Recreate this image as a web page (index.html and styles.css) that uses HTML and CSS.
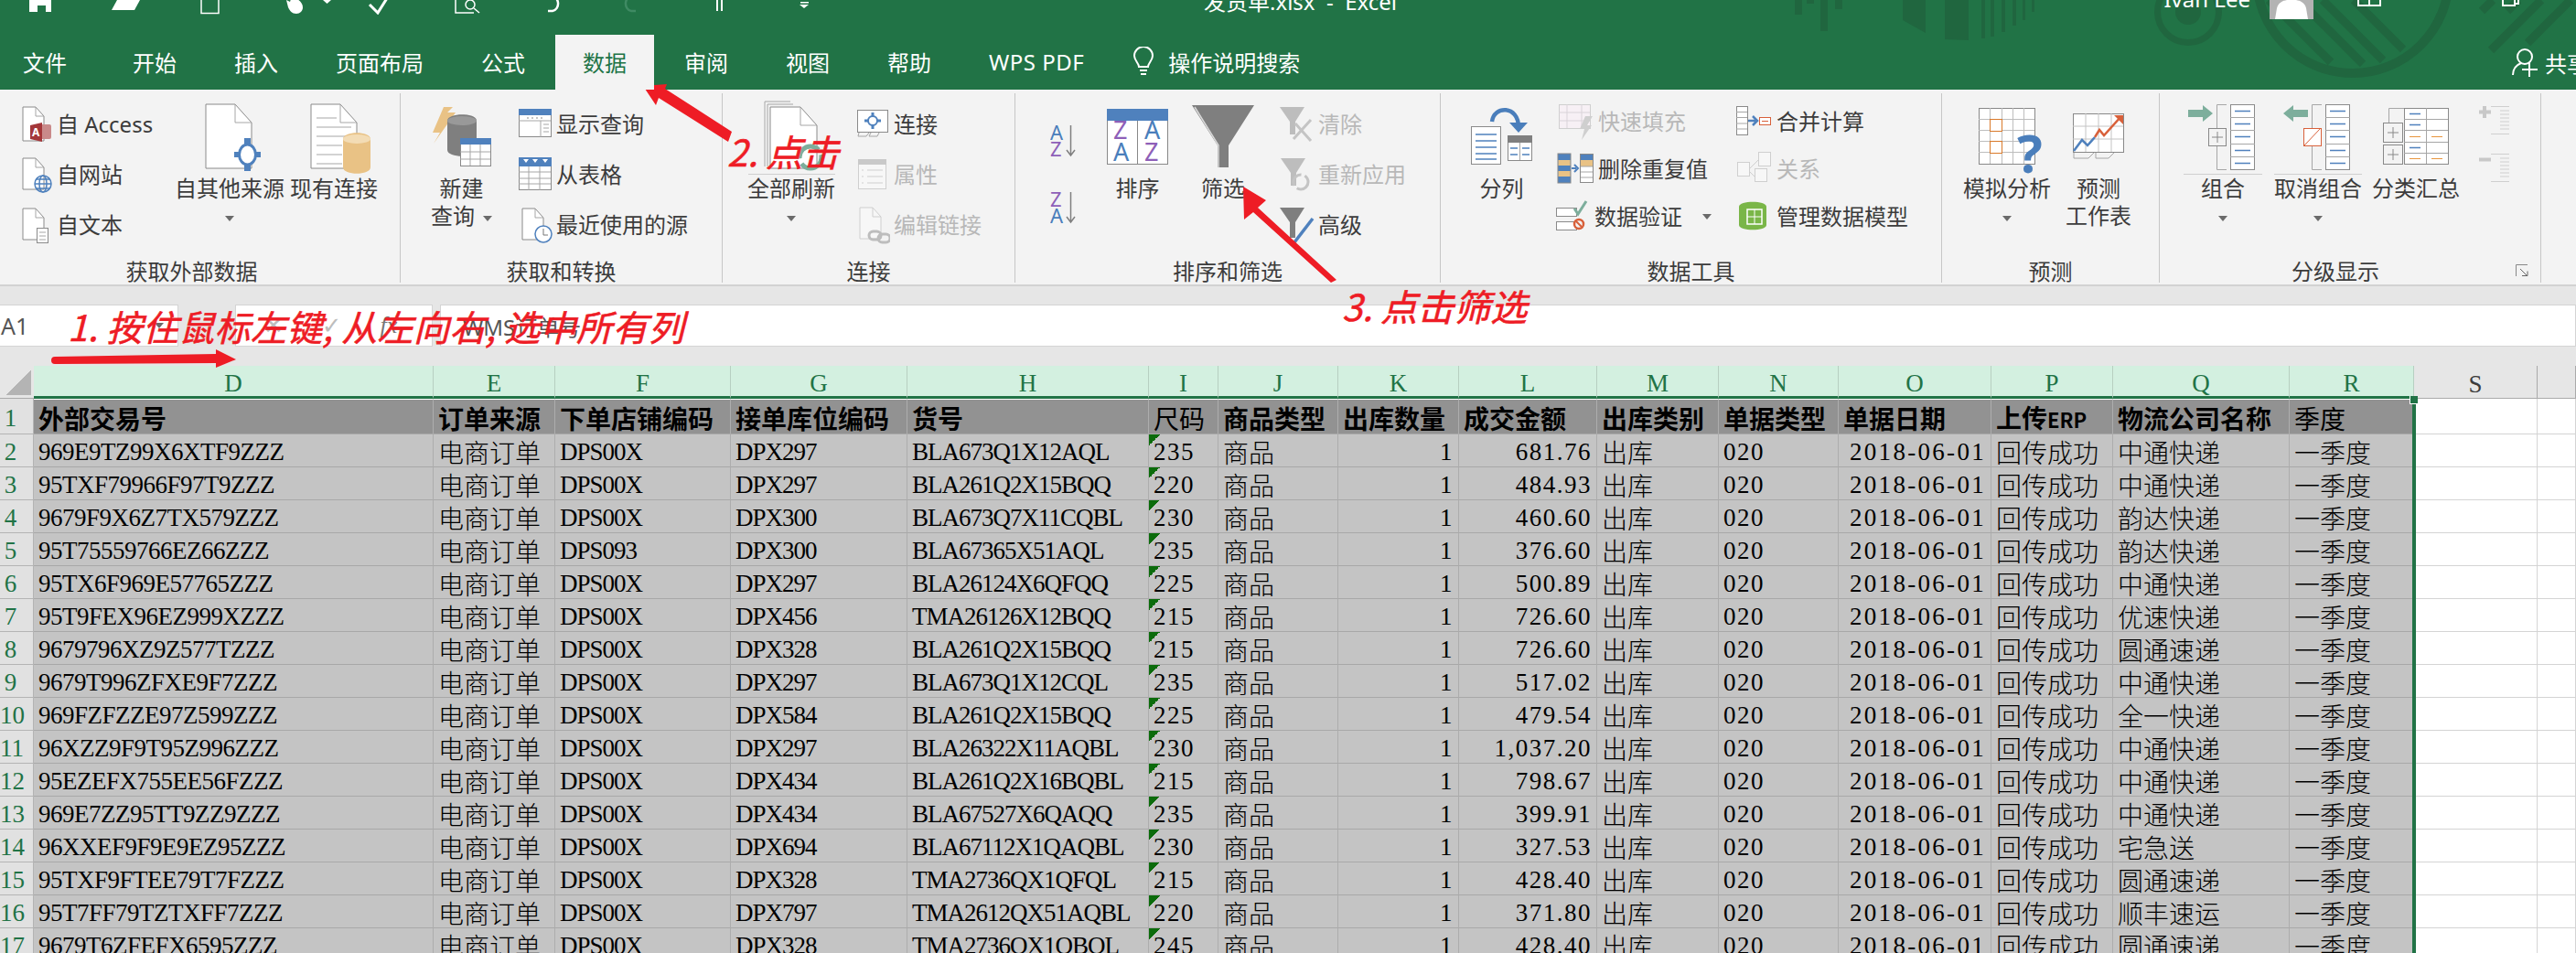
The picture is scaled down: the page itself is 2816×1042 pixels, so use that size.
FILE: index.html
```html
<!DOCTYPE html>
<html lang="zh-CN">
  <head>
    <meta charset="UTF-8" />
    <title>发货单.xlsx - Excel</title>
    <link rel="stylesheet" href="styles.css">
  </head>
  <body>
    <div class="page">
      <header class="titlebar">
        <!-- background pattern of the Excel theme -->
        <svg class="titlebar-art" width="2816" height="98">
          <g fill="#20663f">
            <rect x="1962" y="0" width="8" height="16"/>
            <rect x="1975" y="0" width="8" height="4"/>
            <rect x="1990" y="0" width="8" height="34"/>
            <rect x="2006" y="0" width="8" height="10"/>
            <path d="M2080 0h25v36l-25-14z"/>
            <path d="M2126 0h26v44l-26-1z"/>
            <rect x="2166" y="0" width="4" height="42"/>
            <rect x="2176" y="0" width="4" height="40"/>
            <rect x="2188" y="0" width="4" height="35"/>
            <rect x="2200" y="0" width="4" height="28"/>
            <rect x="2211" y="0" width="3" height="22"/>
            <rect x="2221" y="0" width="3" height="13"/>
            <circle cx="2392" cy="13" r="14"/>
          </g>
          <g fill="none" stroke="#20663f">
            <circle cx="2392" cy="13" r="33.5" stroke-width="7"/>
            <circle cx="2572" cy="-25" r="105" stroke-width="10"/>
            <g stroke-width="9">
              <path d="M2548 68L2480 0M2583 70L2513 0M2605 66L2539 0M2627 54L2573 0"/>
              <path d="M2723 55L2778 0M2763 47L2810 0M2713 12L2725 0M2741 12L2753 0"/>
            </g>
          </g>
        </svg>
        <div class="titleline">
          <svg class="qat" width="900" height="16" fill="#fff">
            <path d="M32 0h24v13H32z"/>
            <rect x="41" y="6" width="9" height="7" fill="#217346"/>
            <path d="M128 0h25l-6 11h-25z"/>
            <rect x="220" y="-5" width="19" height="19.5" fill="none" stroke="#fff" stroke-width="1.5"/>
            <path d="M313 0l4 2 1-3h7c3 2 6 5 6 9 0 4-3 7-7 7-5 0-7-3-9-7z"/>
            <path d="M353 0h9l-4.500 4z"/>
            <path d="M404 5l9 9 12-19" fill="none" stroke="#fff" stroke-width="3"/>
            <g fill="none" stroke="#fff" stroke-width="1.500">
              <path d="M498 -3V14H518"/>
              <circle cx="514" cy="5" r="5"/>
              <path d="M518 9l6 5"/>
              <path d="M602 -4a7 8 0 0 1 2 16h-5" stroke-width="2.500"/>
              <path d="M692 -4a7 8 0 0 0 -2 16h5" stroke="#3f8a63" stroke-width="2.500"/>
              <path d="M784 -2v14M789 -2v14" stroke-width="2"/>
            </g>
            <rect x="875" y="2" width="9" height="1.500"/>
            <path d="M874 5h10l-5 4z"/>
          </svg>
          <span class="doc-title">发货单.xlsx&nbsp; - &nbsp;Excel</span>
          <span class="user-name">Ivan Lee</span>
          <svg class="avatar" width="48" height="21">
            <rect width="48" height="21" fill="#b3b3b3"/>
            <circle cx="24" cy="-4" r="9" fill="#8f8f8f"/>
            <path d="M6 21l2-12c1-6 8-9 11-9h10c3 0 10 3 11 9l2 12z" fill="#fff"/>
          </svg>
          <svg class="win-icons" width="180" height="8" fill="none" stroke="#fff" stroke-width="2">
            <path d="M1 -3v9h24v-9M13 -3v9"/>
            <path d="M159 -3v9h13v-9M172 -1h4v5h-4"/>
          </svg>
        </div>
        <nav class="tabs">
          <a class="tab">文件</a>
          <a class="tab">开始</a>
          <a class="tab">插入</a>
          <a class="tab">页面布局</a>
          <a class="tab">公式</a>
          <a class="tab active">数据</a>
          <a class="tab">审阅</a>
          <a class="tab">视图</a>
          <a class="tab">帮助</a>
          <a class="tab tab-latin">WPS PDF</a>
          <span class="tell-me">
            <svg width="24" height="32" fill="none" stroke="#fff" stroke-width="2">
              <path d="M7 22c0-4-5-7-5-12a10 10 0 0 1 20 0c0 5-5 8-5 12z"/>
              <path d="M8 26h8M9 30h6"/>
            </svg>
            操作说明搜索
          </span>
          <span class="share">
            <svg width="28" height="31" fill="none" stroke="#fff" stroke-width="2">
              <circle cx="14" cy="9" r="8"/>
              <path d="M1 29c0-7 4-11 9-13"/>
              <path d="M19 15v16M11 23h17"/>
            </svg>
            共享
          </span>
        </nav>
      </header>

      <section class="ribbon">
        <div class="group g-external">
          <div class="group-body">
            <div class="small-col col-external">
              <div class="small-row">
                <svg width="34" height="45">
                  <path class="sheet-line" d="M1 4h14l9 10v27H1z"/><path class="fold" d="M15 4v10h9"/>
                  <rect x="19" y="23" width="13" height="16" rx="2" fill="#c98a8a"/>
                  <path d="M9 24l13-3v21l-13-3z" fill="#a4373a"/>
                  <text x="11" y="36" class="badge-a">A</text>
                </svg>
                <span>自 Access</span>
              </div>
              <div class="small-row">
                <svg width="34" height="45">
                  <path class="sheet-line" d="M1 5h14l9 10v24H1z"/><path class="fold" d="M15 5v10h9"/>
                  <circle cx="23" cy="33" r="9" class="blue-line"/>
                  <ellipse cx="23" cy="33" rx="4" ry="9" class="blue-line"/>
                  <path class="blue-line" d="M14 33h18M15 28h16M15 38h16"/>
                </svg>
                <span>自网站</span>
              </div>
              <div class="small-row">
                <svg width="34" height="45">
                  <path class="sheet-line" d="M1 5h14l9 10v24H1z"/><path class="fold" d="M15 5v10h9"/>
                  <rect x="16.500" y="26.500" width="12" height="16" class="sheet-line"/>
                  <path class="fold" d="M19 31h7M19 35h7M19 39h7"/>
                </svg>
                <span>自文本</span>
              </div>
            </div>
            <div class="big">
              <svg width="120" height="89">
                <path class="sheet-line" d="M34 12h32l18 20v50H34z"/><path class="fold" d="M66 12v20h18"/>
                <path fill="#4f81bd" d="M76 49h7v36h-7zM65 64h29v6H65z"/>
                <ellipse cx="79.500" cy="67" rx="9" ry="11" fill="#fff" stroke="#4f81bd" stroke-width="3"/>
              </svg>
              <span>自其他来源</span>
              <span><i class="caret"></i></span>
            </div>
            <div class="big ml6">
              <svg width="96" height="89">
                <path class="sheet-line" d="M23 12h32l18 20v50H23z"/><path class="fold" d="M55 12v20h18"/>
                <path class="fold" d="M29 27h22M29 37h38M29 47h38M29 57h28M29 67h28M29 77h28"/>
                <path d="M58 50c0-9 30-9 30 0v31c0 9-30 9-30 0z" fill="#e9c285"/>
                <ellipse cx="73" cy="50" rx="15" ry="5" fill="#f3dcb5"/>
              </svg>
              <span>现有连接</span>
            </div>
          </div>
          <div class="group-label shift-label">获取外部数据</div>
        </div>

        <div class="group g-transform">
          <div class="group-body">
            <div class="big">
              <svg width="65" height="89">
                <path d="M23 15h-10l-12 28h8l-7 12 24-34h-9z" fill="#e9c285"/>
                <path d="M17 30c0-9 32-9 32 0v32c0 9-32 9-32 0z" fill="#7f7f7f"/>
                <ellipse cx="33" cy="30" rx="16" ry="5" fill="#999"/>
                <rect x="31.500" y="49.500" width="33" height="30" class="sheet-line"/>
                <rect x="31" y="49" width="34" height="7" fill="#4f81bd"/>
                <path class="fold" d="M31 64h33M31 72h33M42 56v23M53 56v23"/>
              </svg>
              <span>新建</span>
              <span>查询<i class="caret inline"></i></span>
            </div>
            <div class="small-col ml28">
              <div class="small-row">
                <svg width="38" height="45">
                  <rect x="1.500" y="6.500" width="35" height="30" class="sheet-line"/>
                  <rect x="1" y="6" width="36" height="7" fill="#4f81bd"/>
                  <path class="fold" d="M1 19h35M25 19v18M28 23h6M28 27h6M28 31h6"/>
                  <path d="M10 16h18" stroke="#888" stroke-dasharray="2 3"/>
                </svg>
                <span>显示查询</span>
              </div>
              <div class="small-row">
                <svg width="38" height="45">
                  <rect x="1.500" y="4.500" width="35" height="35" class="sheet-line"/>
                  <rect x="1" y="4" width="36" height="10" fill="#4f81bd"/>
                  <path d="M6 6h6l-3 4zM16 6h6l-3 4zM27 6h6l-3 4z" fill="#fff"/>
                  <path class="fold" d="M1 20h35M1 27h35M1 33h35M12 14v26M24 14v26"/>
                </svg>
                <span>从表格</span>
              </div>
              <div class="small-row">
                <svg width="38" height="45">
                  <path class="sheet-line" d="M5 5h14l9 10v24H5z"/><path class="fold" d="M19 5v10h9"/>
                  <circle cx="28" cy="33" r="9" fill="#fff" stroke="#4f81bd" stroke-width="1.500"/>
                  <path d="M28 27v7h5" fill="none" stroke="#777"/>
                </svg>
                <span>最近使用的源</span>
              </div>
            </div>
          </div>
          <div class="group-label">获取和转换</div>
        </div>

        <div class="group g-conn">
          <div class="group-body">
            <div class="big split">
              <svg width="95" height="88">
                <path class="fold" d="M18 80V9h28M21 80V12h28"/>
                <path class="sheet-line" d="M24 82V15h33l18 20v47z"/><path class="fold" d="M57 15v20h18"/>
                <circle cx="68" cy="70" r="12" fill="none" stroke="#7dae9c" stroke-width="5" stroke-dasharray="30 6"/>
              </svg>
              <span>全部刷新</span>
              <span><i class="caret"></i></span>
            </div>
            <div class="small-col ml23">
              <div class="small-row">
                <svg width="37" height="45">
                  <rect x="1.500" y="7.500" width="33" height="24" class="sheet-line"/>
                  <path class="fold" d="M3 32l-1 4h9l3-4M16 32l-2 4h9l2-4"/>
                  <circle cx="18" cy="19" r="5" fill="#fff" stroke="#4f81bd" stroke-width="2"/>
                  <path d="M18 10v4M18 24v4M9 19h4M23 19h4" stroke="#4f81bd" stroke-width="3"/>
                </svg>
                <span>连接</span>
              </div>
              <div class="small-row off">
                <svg width="37" height="45">
                  <rect x="2.500" y="6.500" width="30" height="32" fill="#f7f7f7" stroke="#cfcfcf"/>
                  <rect x="2" y="6" width="31" height="6" fill="#c9c9c9"/>
                  <path d="M12 18h17M12 25h17M12 32h17M6 18h2M6 25h2M6 32h2" stroke="#cfcfcf" fill="none"/>
                </svg>
                <span>属性</span>
              </div>
              <div class="small-row off">
                <svg width="37" height="45">
                  <path d="M4 4h14l9 10v24H4z" fill="#f7f7f7" stroke="#cfcfcf"/>
                  <path d="M18 4v10h9" fill="none" stroke="#cfcfcf"/>
                  <rect x="14" y="30" width="13" height="9" rx="4.500" fill="none" stroke="#bdbdbd" stroke-width="3"/>
                  <rect x="24" y="33" width="13" height="9" rx="4.500" fill="none" stroke="#bdbdbd" stroke-width="3"/>
                </svg>
                <span>编辑链接</span>
              </div>
            </div>
          </div>
          <div class="group-label">连接</div>
        </div>

        <div class="group g-sort">
          <div class="group-body">
            <div class="sort-col">
              <div class="sort-row">
                <svg width="28" height="36">
                  <text x="0" y="17" class="az blue-text">A</text>
                  <text x="0" y="35" class="az purple-text">Z</text>
                  <path d="M22.500 1v33M18 28l4.500 6 4.500-6" fill="none" stroke="#7f7f7f" stroke-width="1.500"/>
                </svg>
              </div>
              <div class="sort-row">
                <svg width="28" height="36">
                  <text x="0" y="17" class="az purple-text">Z</text>
                  <text x="0" y="35" class="az blue-text">A</text>
                  <path d="M22.500 1v33M18 28l4.500 6 4.500-6" fill="none" stroke="#7f7f7f" stroke-width="1.500"/>
                </svg>
              </div>
            </div>
            <div class="big ml34">
              <svg width="67" height="89">
                <rect x=".5" y="17.500" width="66" height="60" fill="#fff" stroke="#888"/>
                <rect x="0" y="17" width="67" height="13" fill="#4f81bd"/>
                <path d="M33.500 30v47" stroke="#888"/>
                <text x="7" y="50" class="az-big purple-text">Z</text>
                <text x="41" y="50" class="az-big blue-text">A</text>
                <text x="7" y="74" class="az-big blue-text">A</text>
                <text x="41" y="74" class="az-big purple-text">Z</text>
              </svg>
              <span>排序</span>
            </div>
            <div class="big ml26">
              <svg width="68" height="89">
                <path d="M0 13h68L40 57v24H28V57z" fill="#7f7f7f"/>
                <path d="M3 15l26 42v24" fill="none" stroke="#d9d9d9" stroke-width="1.500"/>
              </svg>
              <span>筛选</span>
            </div>
            <div class="small-col ml28">
              <div class="small-row off">
                <svg width="38" height="45">
                  <path d="M0 4h27L17 20v14h-6V20z" fill="#bdbdbd"/>
                  <path d="M15 39l19-21M17 22l17 19" stroke="#c4c4c4" stroke-width="3"/>
                </svg>
                <span>清除</span>
              </div>
              <div class="small-row off">
                <svg width="38" height="45">
                  <path d="M1 5h27L18 21v14h-6V21z" fill="#bdbdbd"/>
                  <circle cx="23" cy="31" r="8" fill="none" stroke="#c4c4c4" stroke-width="3" stroke-dasharray="17 4"/>
                </svg>
                <span>重新应用</span>
              </div>
              <div class="small-row">
                <svg width="38" height="45">
                  <path d="M0 4h27L17 20v17h-6V20z" fill="#7f7f7f"/>
                  <path d="M36 16L16 42" stroke="#4f81bd" stroke-width="3.500"/>
                </svg>
                <span>高级</span>
              </div>
            </div>
          </div>
          <div class="group-label">排序和筛选</div>
        </div>

        <div class="group g-tools">
          <div class="group-body">
            <div class="big">
              <svg width="67" height="89">
                <rect x=".5" y="36.500" width="32" height="41" class="sheet-line"/>
                <path class="blue-line" d="M5 45h23M5 52h23M5 59h23M5 66h23M5 72h23"/>
                <rect x="40.500" y="46.500" width="26" height="27" class="sheet-line"/>
                <rect x="40" y="46" width="27" height="8" fill="#7f7f7f"/>
                <path class="fold" d="M53.500 54v19"/>
                <path class="blue-line" d="M43 60h8M56 60h8M43 67h8M56 67h8"/>
                <path d="M23 31c2-18 29-18 29 6" fill="none" stroke="#4a7ebb" stroke-width="4.500"/>
                <path d="M42 32h20l-10 11z" fill="#4a7ebb"/>
              </svg>
              <span>分列</span>
            </div>
            <div class="small-col tight col-fill ml26">
              <div class="small-row off">
                <svg width="42" height="44">
                  <rect x="3.500" y="3.500" width="34" height="26" fill="#f7f0f5" stroke="#cfcfcf"/>
                  <path d="M3 12h34M3 21h34M12 3v26M28 3v26" stroke="#d9d3d9" fill="none"/>
                  <path d="M32 16h8l-6 10h5l-11 16 3-12h-5z" fill="#cfcfcf"/>
                </svg>
                <span>快速填充</span>
              </div>
              <div class="small-row">
                <svg width="42" height="44">
                  <rect x="2" y="5" width="14" height="32" fill="#4f81bd" stroke="#888"/>
                  <rect x="2.500" y="12" width="13" height="6" fill="#e9c285"/>
                  <rect x="2.500" y="24" width="13" height="6" fill="#e9c285"/>
                  <rect x="26.500" y="5.500" width="14" height="31" class="sheet-line"/>
                  <rect x="27" y="6" width="13" height="6" fill="#4f81bd"/>
                  <rect x="27" y="12" width="13" height="7" fill="#e9c285"/>
                  <path class="fold" d="M27 19h13M27 25h13M27 31h13"/>
                  <path d="M17 21h5M20 17l4 4-4 4" fill="none" stroke="#4f81bd" stroke-width="2"/>
                </svg>
                <span>删除重复值</span>
              </div>
              <div class="small-row">
                <svg width="38" height="44">
                  <rect x=".5" y="12.500" width="22" height="9" class="sheet-line"/>
                  <rect x=".5" y="27.500" width="22" height="9" class="sheet-line"/>
                  <path d="M20 13l4 6 9-14" fill="none" stroke="#7dae9c" stroke-width="3"/>
                  <circle cx="25" cy="30" r="5" fill="#f3f3f3" stroke="#d8603a" stroke-width="2.500"/>
                  <path d="M22 27l6 6" stroke="#d8603a" stroke-width="2"/>
                </svg>
                <span>数据验证</span>
                <i class="caret inline wide"></i>
              </div>
            </div>
            <div class="small-col tight">
              <div class="small-row">
                <svg width="40" height="44">
                  <rect x=".5" y="5.500" width="12" height="31" class="sheet-line"/>
                  <path class="fold" d="M0 11.500h12M0 17.500h12M0 24h12M0 30h12"/>
                  <path d="M13 21h8M18 16l5 5-5 5" fill="none" stroke="#4f81bd" stroke-width="2.500"/>
                  <rect x="25.500" y="17.500" width="12" height="8" fill="#fff" stroke="#d8603a"/>
                  <path d="M28 21.500h7" stroke="#d8603a"/>
                </svg>
                <span>合并计算</span>
              </div>
              <div class="small-row off">
                <svg width="40" height="44">
                  <g fill="#f7f7f7" stroke="#cfcfcf">
                    <rect x="1.500" y="14.500" width="13" height="15"/>
                    <rect x="24.500" y="3.500" width="13" height="15"/>
                    <rect x="20.500" y="21.500" width="13" height="14"/>
                    <path d="M14 22l10-10M14 24l6 6" fill="none"/>
                  </g>
                </svg>
                <span>关系</span>
              </div>
              <div class="small-row">
                <svg width="40" height="44">
                  <path d="M3 11c0-7 30-7 30 0v20c0 7-30 7-30 0z" fill="#7ab648"/>
                  <path d="M12 14h16v16H12z" fill="none" stroke="#fff" stroke-width="1.500"/>
                  <path d="M20 14v16M12 22h16" stroke="#fff"/>
                </svg>
                <span>管理数据模型</span>
              </div>
            </div>
          </div>
          <div class="group-label">数据工具</div>
        </div>

        <div class="group g-forecast">
          <div class="group-body">
            <div class="big">
              <svg width="96" height="89">
                <rect x="17.500" y="16.500" width="61" height="61" fill="#fff" stroke="#888"/>
                <path d="M29.500 16v61M42.500 16v61M54.500 16v61M66.500 16v61M17 28.500h61M17 40.500h61M17 52.500h61M17 64.500h61" stroke="#bdbdbd" fill="none"/>
                <rect x="29.500" y="28.500" width="13" height="13" fill="#fff" stroke="#d97a2b"/>
                <rect x="29.500" y="52.500" width="13" height="13" fill="#fff" stroke="#d97a2b"/>
                <text x="59" y="87" class="help-mark">?</text>
              </svg>
              <span>模拟分析</span>
              <span><i class="caret"></i></span>
            </div>
            <div class="big ml16">
              <svg width="71" height="89">
                <rect x="7.500" y="22.500" width="55" height="42" fill="#fff" stroke="#888"/>
                <path d="M21 22v42M35 22v42M49 22v42M7 36h55M7 50h55" stroke="#c4c4c4" fill="none"/>
                <path class="fold" d="M8 65v6h16l6-6M32 65v6h14l6-6"/>
                <path d="M8 63l9-12 6 6 8-9" fill="none" stroke="#4f81bd" stroke-width="2.500"/>
                <path d="M31 48l5-8 5 6 19-21" fill="none" stroke="#d8603a" stroke-width="2.500"/>
                <path d="M52 24h10v10z" fill="#d8603a"/>
              </svg>
              <span>预测</span>
              <span>工作表</span>
            </div>
          </div>
          <div class="group-label">预测</div>
        </div>

        <div class="group g-outline">
          <div class="group-body">
            <div class="big split">
              <svg width="86" height="88">
                <path d="M5 18h16v-5l11 9-11 9v-5H5z" fill="#7dae9c"/>
                <path class="fold" d="M47 12.500H36.500v71H47"/>
                <rect x="27.500" y="38.500" width="19" height="19" fill="#f3f3f3" stroke="#888"/>
                <path d="M37 42v12M31 48h12" stroke="#888"/>
                <rect x="51.500" y="12.500" width="26" height="71" class="sheet-line"/>
                <path class="fold" d="M51 26.500h27M51 40.500h27M51 55.500h27M51 69.500h27"/>
                <path class="blue-line" d="M56 19.500h17M56 33.500h17M56 47.500h17M56 62.500h17M56 76.500h17"/>
              </svg>
              <span>组合</span>
              <span><i class="caret"></i></span>
            </div>
            <div class="big split ml13">
              <svg width="96" height="88">
                <path d="M37 18H21v-5l-11 9 11 9v-5h16z" fill="#7dae9c"/>
                <path class="fold" d="M52 12.500H41.500v71H52"/>
                <rect x="32.500" y="38.500" width="19" height="19" fill="#fff" stroke="#d8603a"/>
                <path d="M33 57l18-19" stroke="#d8603a"/>
                <rect x="56.500" y="12.500" width="26" height="71" class="sheet-line"/>
                <path class="fold" d="M56 26.500h27M56 40.500h27M56 55.500h27M56 69.500h27"/>
                <path class="blue-line" d="M61 19.500h17M61 33.500h17M61 47.500h17M61 62.500h17M61 76.500h17"/>
              </svg>
              <span>取消组合</span>
              <span><i class="caret"></i></span>
            </div>
            <div class="big ml11">
              <svg width="95" height="89">
                <path class="fold" d="M17.500 32V16.500H34"/>
                <rect x="11.500" y="32.500" width="21" height="21" fill="#f3f3f3" stroke="#888"/>
                <rect x="11.500" y="56.500" width="21" height="21" fill="#f3f3f3" stroke="#888"/>
                <path d="M22 37v12M16 43h12M22 61v12M16 67h12" stroke="#888"/>
                <rect x="34.500" y="16.500" width="48" height="61" class="sheet-line"/>
                <path class="fold" d="M34 28.500h48M34 40.500h48M34 53.500h48M34 65.500h48M58.500 16v61"/>
                <path class="blue-line" d="M40 22.500h12M40 34.500h12M40 59.500h12"/>
                <path d="M40 47.500h12M64 47.500h12M40 71.500h12M64 71.500h12" stroke="#e8963e" fill="none"/>
              </svg>
              <span>分类汇总</span>
            </div>
            <div class="small-col tight ml21">
              <div class="small-row off">
                <svg width="33" height="44">
                  <path d="M6 5v13M0 11.500h13" stroke="#c8c8c8" stroke-width="4"/>
                  <path d="M13 5.500h20M23 10h10M23 14h10M23 18h10M23 22h10M23 26h10M23 30h10M13 35.500h20" stroke="#cfcfcf"/>
                </svg>
              </div>
              <div class="small-row off">
                <svg width="33" height="44">
                  <path d="M0 11.500h13" stroke="#c8c8c8" stroke-width="4"/>
                  <path d="M13 5.500h20M23 10h10M23 14h10M23 18h10M23 22h10M23 26h10M23 30h10M13 35.500h20" stroke="#cfcfcf"/>
                </svg>
              </div>
            </div>
          </div>
          <div class="group-label pull-label">分级显示</div>
          <svg class="launcher" width="14" height="14" fill="none" stroke="#888">
            <path d="M.5 13V.5H13"/>
            <path d="M5 5l7 7M7 12.500h6v-5" stroke="#666"/>
          </svg>
        </div>
      </section>

      <div class="formula-band">
        <div class="fx-box name-box">A1<i class="caret name-caret"></i></div>
        <div class="fx-box btn-box">
          <span>✕</span><span>✓</span><span class="fx-mark">fx</span>
        </div>
        <div class="fx-box formula">WMS订单号</div>
      </div>

      <div class="sheet">
        <table>
          <colgroup>
            <col width="37"><col width="437"><col width="133"><col width="192"><col width="193">
            <col width="264"><col width="76"><col width="131"><col width="132"><col width="151">
            <col width="133"><col width="131"><col width="167"><col width="133"><col width="193">
            <col width="136"><col width="135"><col width="42">
          </colgroup>
          <thead>
            <tr>
              <th class="corner"></th>
              <th class="sel">D</th><th class="sel">E</th><th class="sel">F</th><th class="sel">G</th>
              <th class="sel">H</th><th class="sel">I</th><th class="sel">J</th><th class="sel">K</th>
              <th class="sel">L</th><th class="sel">M</th><th class="sel">N</th><th class="sel">O</th>
              <th class="sel">P</th><th class="sel">Q</th><th class="sel">R</th>
              <th class="plain">S</th><th class="plain"></th>
            </tr>
          </thead>
          <tbody>
            <tr class="head">
              <td class="rh">1</td>
              <td>外部交易号</td><td>订单来源</td><td>下单店铺编码</td><td>接单库位编码</td><td>货号</td>
              <td class="thin">尺码</td><td>商品类型</td><td>出库数量</td><td>成交金额</td><td>出库类别</td>
              <td>单据类型</td><td>单据日期</td><td>上传<span class="erp">ERP</span></td><td>物流公司名称</td>
              <td class="thin">季度</td><td class="blank"></td><td class="blank"></td>
            </tr>
            <tr>
              <td class="rh">2</td><td class="ref">969E9TZ99X6XTF9ZZZ</td><td class="cn">电商订单</td><td>DPS00X</td><td>DPX297</td><td>BLA673Q1X12AQL</td><td class="tag">235</td><td class="cn">商品</td><td class="r">1</td><td class="r">681.76</td><td class="cn">出库</td><td class="code">020</td><td class="r date">2018-06-01</td><td class="cn">回传成功</td><td class="cn">中通快递</td><td class="cn">一季度</td><td class="blank"></td><td class="blank"></td>
            </tr>
            <tr>
              <td class="rh">3</td><td class="ref">95TXF79966F97T9ZZZ</td><td class="cn">电商订单</td><td>DPS00X</td><td>DPX297</td><td>BLA261Q2X15BQQ</td><td class="tag">220</td><td class="cn">商品</td><td class="r">1</td><td class="r">484.93</td><td class="cn">出库</td><td class="code">020</td><td class="r date">2018-06-01</td><td class="cn">回传成功</td><td class="cn">中通快递</td><td class="cn">一季度</td><td class="blank"></td><td class="blank"></td>
            </tr>
            <tr>
              <td class="rh">4</td><td class="ref">9679F9X6Z7TX579ZZZ</td><td class="cn">电商订单</td><td>DPS00X</td><td>DPX300</td><td>BLA673Q7X11CQBL</td><td class="tag">230</td><td class="cn">商品</td><td class="r">1</td><td class="r">460.60</td><td class="cn">出库</td><td class="code">020</td><td class="r date">2018-06-01</td><td class="cn">回传成功</td><td class="cn">韵达快递</td><td class="cn">一季度</td><td class="blank"></td><td class="blank"></td>
            </tr>
            <tr>
              <td class="rh">5</td><td class="ref">95T75559766EZ66ZZZ</td><td class="cn">电商订单</td><td>DPS093</td><td>DPX300</td><td>BLA67365X51AQL</td><td class="tag">235</td><td class="cn">商品</td><td class="r">1</td><td class="r">376.60</td><td class="cn">出库</td><td class="code">020</td><td class="r date">2018-06-01</td><td class="cn">回传成功</td><td class="cn">韵达快递</td><td class="cn">一季度</td><td class="blank"></td><td class="blank"></td>
            </tr>
            <tr>
              <td class="rh">6</td><td class="ref">95TX6F969E57765ZZZ</td><td class="cn">电商订单</td><td>DPS00X</td><td>DPX297</td><td>BLA26124X6QFQQ</td><td class="tag">225</td><td class="cn">商品</td><td class="r">1</td><td class="r">500.89</td><td class="cn">出库</td><td class="code">020</td><td class="r date">2018-06-01</td><td class="cn">回传成功</td><td class="cn">中通快递</td><td class="cn">一季度</td><td class="blank"></td><td class="blank"></td>
            </tr>
            <tr>
              <td class="rh">7</td><td class="ref">95T9FEX96EZ999XZZZ</td><td class="cn">电商订单</td><td>DPS00X</td><td>DPX456</td><td>TMA26126X12BQQ</td><td class="tag">215</td><td class="cn">商品</td><td class="r">1</td><td class="r">726.60</td><td class="cn">出库</td><td class="code">020</td><td class="r date">2018-06-01</td><td class="cn">回传成功</td><td class="cn">优速快递</td><td class="cn">一季度</td><td class="blank"></td><td class="blank"></td>
            </tr>
            <tr>
              <td class="rh">8</td><td class="ref">9679796XZ9Z577TZZZ</td><td class="cn">电商订单</td><td>DPS00X</td><td>DPX328</td><td>BLA261Q2X15BQQ</td><td class="tag">215</td><td class="cn">商品</td><td class="r">1</td><td class="r">726.60</td><td class="cn">出库</td><td class="code">020</td><td class="r date">2018-06-01</td><td class="cn">回传成功</td><td class="cn">圆通速递</td><td class="cn">一季度</td><td class="blank"></td><td class="blank"></td>
            </tr>
            <tr>
              <td class="rh">9</td><td class="ref">9679T996ZFXE9F7ZZZ</td><td class="cn">电商订单</td><td>DPS00X</td><td>DPX297</td><td>BLA673Q1X12CQL</td><td class="tag">235</td><td class="cn">商品</td><td class="r">1</td><td class="r">517.02</td><td class="cn">出库</td><td class="code">020</td><td class="r date">2018-06-01</td><td class="cn">回传成功</td><td class="cn">中通快递</td><td class="cn">一季度</td><td class="blank"></td><td class="blank"></td>
            </tr>
            <tr>
              <td class="rh">10</td><td class="ref">969FZFZZE97Z599ZZZ</td><td class="cn">电商订单</td><td>DPS00X</td><td>DPX584</td><td>BLA261Q2X15BQQ</td><td class="tag">225</td><td class="cn">商品</td><td class="r">1</td><td class="r">479.54</td><td class="cn">出库</td><td class="code">020</td><td class="r date">2018-06-01</td><td class="cn">回传成功</td><td class="cn">全一快递</td><td class="cn">一季度</td><td class="blank"></td><td class="blank"></td>
            </tr>
            <tr>
              <td class="rh">11</td><td class="ref">96XZZ9F9T95Z996ZZZ</td><td class="cn">电商订单</td><td>DPS00X</td><td>DPX297</td><td>BLA26322X11AQBL</td><td class="tag">230</td><td class="cn">商品</td><td class="r">1</td><td class="r">1,037.20</td><td class="cn">出库</td><td class="code">020</td><td class="r date">2018-06-01</td><td class="cn">回传成功</td><td class="cn">中通快递</td><td class="cn">一季度</td><td class="blank"></td><td class="blank"></td>
            </tr>
            <tr>
              <td class="rh">12</td><td class="ref">95EZEFX755EE56FZZZ</td><td class="cn">电商订单</td><td>DPS00X</td><td>DPX434</td><td>BLA261Q2X16BQBL</td><td class="tag">215</td><td class="cn">商品</td><td class="r">1</td><td class="r">798.67</td><td class="cn">出库</td><td class="code">020</td><td class="r date">2018-06-01</td><td class="cn">回传成功</td><td class="cn">中通快递</td><td class="cn">一季度</td><td class="blank"></td><td class="blank"></td>
            </tr>
            <tr>
              <td class="rh">13</td><td class="ref">969E7ZZ95TT9ZZ9ZZZ</td><td class="cn">电商订单</td><td>DPS00X</td><td>DPX434</td><td>BLA67527X6QAQQ</td><td class="tag">235</td><td class="cn">商品</td><td class="r">1</td><td class="r">399.91</td><td class="cn">出库</td><td class="code">020</td><td class="r date">2018-06-01</td><td class="cn">回传成功</td><td class="cn">中通快递</td><td class="cn">一季度</td><td class="blank"></td><td class="blank"></td>
            </tr>
            <tr>
              <td class="rh">14</td><td class="ref">96XXEF9F9E9EZ95ZZZ</td><td class="cn">电商订单</td><td>DPS00X</td><td>DPX694</td><td>BLA67112X1QAQBL</td><td class="tag">230</td><td class="cn">商品</td><td class="r">1</td><td class="r">327.53</td><td class="cn">出库</td><td class="code">020</td><td class="r date">2018-06-01</td><td class="cn">回传成功</td><td class="cn">宅急送</td><td class="cn">一季度</td><td class="blank"></td><td class="blank"></td>
            </tr>
            <tr>
              <td class="rh">15</td><td class="ref">95TXF9FTEE79T7FZZZ</td><td class="cn">电商订单</td><td>DPS00X</td><td>DPX328</td><td>TMA2736QX1QFQL</td><td class="tag">215</td><td class="cn">商品</td><td class="r">1</td><td class="r">428.40</td><td class="cn">出库</td><td class="code">020</td><td class="r date">2018-06-01</td><td class="cn">回传成功</td><td class="cn">圆通速递</td><td class="cn">一季度</td><td class="blank"></td><td class="blank"></td>
            </tr>
            <tr>
              <td class="rh">16</td><td class="ref">95T7FF79TZTXFF7ZZZ</td><td class="cn">电商订单</td><td>DPS00X</td><td>DPX797</td><td>TMA2612QX51AQBL</td><td class="tag">220</td><td class="cn">商品</td><td class="r">1</td><td class="r">371.80</td><td class="cn">出库</td><td class="code">020</td><td class="r date">2018-06-01</td><td class="cn">回传成功</td><td class="cn">顺丰速运</td><td class="cn">一季度</td><td class="blank"></td><td class="blank"></td>
            </tr>
            <tr>
              <td class="rh">17</td><td class="ref">9679T6ZFEFX6595ZZZ</td><td class="cn">电商订单</td><td>DPS00X</td><td>DPX328</td><td>TMA2736QX1QBQL</td><td class="tag">245</td><td class="cn">商品</td><td class="r">1</td><td class="r">428.40</td><td class="cn">出库</td><td class="code">020</td><td class="r date">2018-06-01</td><td class="cn">回传成功</td><td class="cn">圆通速递</td><td class="cn">一季度</td><td class="blank"></td><td class="blank"></td>
            </tr>
          </tbody>
        </table>
        <div class="sel-edge"></div>
        <div class="sel-handle"></div>
      </div>

      <!-- red tutorial marks drawn on top of the screenshot -->
      <svg class="marks" width="2816" height="1042" fill="#ee1c25">
        <path d="M60 390l176-3v-5l22 11-22 9v-5l-176 1a4 4 0 0 1 0-8z"/>
        <path d="M800 144L727 97l2-5-26 2 14 21 3-8 76 48z"/>
        <path d="M1461 306l-6 3L1370 232l-10 8-1-36 25 15-9 8z"/>
      </svg>
      <div class="note note-1">1. 按住鼠标左键, 从左向右, 选中所有列</div>
      <div class="note note-2">2. 点击</div>
      <div class="note note-3">3. 点击筛选</div>
    </div>
  </body>
</html>
```

FILE: styles.css
```css
html,
body {
  margin: 0;
  padding: 0;
  height: 100%;
  overflow: hidden;
  background-color: #fff;
}

.page {
  position: relative;
  width: 2816px;
  height: 1042px;
  overflow: hidden;
  font-family: "Noto Sans", "Noto Sans CJK SC", sans-serif;
  font-size: 24px;
  color: #3c3c3c;
}

svg {
  display: block;
  flex-shrink: 0;
}

/* title bar */
.titlebar {
  position: relative;
  height: 98px;
  background-color: #217346;
  color: #fff;
}

.titlebar-art {
  position: absolute;
  top: 0;
  left: 0;
}

.titleline {
  position: relative;
  z-index: 1;
  display: flex;
  align-items: flex-start;
  height: 38px;
}

.doc-title,
.user-name {
  line-height: 24px;
  white-space: nowrap;
}

.doc-title {
  margin: -10px 0 0 416px;
}

.user-name {
  margin: -13px 0 0 auto;
}

.avatar {
  margin-left: 21px;
}

.win-icons {
  margin: 0 59px 0 48px;
}

.tabs {
  position: relative;
  z-index: 1;
  display: flex;
  align-items: center;
  gap: 3px;
  height: 60px;
}

.tab {
  display: flex;
  align-items: center;
  height: 58px;
  padding: 0 30px 2px;
  white-space: nowrap;
}

.tab:first-child {
  margin: 0 9px 0 -5px;
}

.tab.active {
  background-color: #f3f3f3;
  color: #217346;
}

.tab-latin {
  letter-spacing: 0.500px;
}

.tell-me {
  display: flex;
  align-items: center;
  gap: 15px;
  margin-left: 20px;
  padding-bottom: 2px;
  white-space: nowrap;
}

.share {
  display: flex;
  align-items: center;
  gap: 8px;
  margin: 0 -14px 0 auto;
  white-space: nowrap;
}

/* ribbon */
.ribbon {
  display: flex;
  height: 215px;
  padding-top: 4px;
  box-sizing: border-box;
  background-color: #f3f3f3;
  border-bottom: 2px solid #d2d2d2;
}

.group {
  position: relative;
  display: flex;
  flex-direction: column;
  height: 207px;
  box-sizing: border-box;
  border-right: 1px solid #c6c6c6;
}

.g-external { width: 438px; }
.g-transform { width: 352px; }
.g-conn { width: 320px; }
.g-sort { width: 465px; }
.g-tools { width: 548px; }
.g-forecast { width: 238px; }
.g-outline { width: 417px; }

.group-body {
  display: flex;
  flex: 1;
  min-height: 0;
}

.g-external .group-body { padding-left: 24px; }
.g-transform .group-body { padding-left: 33px; }
.g-conn .group-body { padding-left: 27px; }
.g-sort .group-body { padding-left: 38px; }
.g-tools .group-body { padding-left: 33px; }
.g-forecast .group-body { padding-left: 23px; }
.g-outline .group-body { padding-left: 26px; }

.group-label {
  height: 24px;
  line-height: 24px;
  text-align: center;
  white-space: nowrap;
}

.shift-label { padding-right: 18px; }
.pull-label { padding-right: 32px; }

.launcher {
  position: absolute;
  right: 13px;
  bottom: 6px;
}

.big {
  display: flex;
  flex-direction: column;
  align-items: center;
  line-height: 30px;
  white-space: nowrap;
}

.big.split svg {
  border-bottom: 1px solid #cfcfcf;
}

.small-col {
  display: flex;
  flex-direction: column;
  padding-top: 6px;
}

.col-external { width: 167px; }
.col-fill { width: 197px; }

.small-row {
  display: flex;
  align-items: center;
  gap: 4px;
  height: 55px;
  white-space: nowrap;
}

.small-row span {
  margin-top: -3px;
}

.small-col.tight {
  padding-top: 5px;
}

.tight .small-row {
  height: 52px;
}

.small-row.off {
  color: #b8b8b8;
}

.sort-col {
  display: flex;
  flex-direction: column;
  padding-top: 15px;
}

.sort-row {
  display: flex;
  align-items: center;
  height: 73px;
}

.ml6 { margin-left: 6px; }
.ml11 { margin-left: 11px; }
.ml13 { margin-left: 13px; }
.ml16 { margin-left: 16px; }
.ml21 { margin-left: 21px; }
.ml23 { margin-left: 23px; }
.ml26 { margin-left: 26px; }
.ml28 { margin-left: 28px; }
.ml34 { margin-left: 34px; }

.caret {
  display: inline-block;
  width: 0;
  height: 0;
  border-left: 5px solid transparent;
  border-right: 5px solid transparent;
  border-top: 6px solid #6a6a6a;
  vertical-align: middle;
}

.caret.inline {
  margin-left: 9px;
}

.caret.wide {
  margin-left: 18px;
}

/* shared svg paint */
.sheet-line {
  fill: #fff;
  stroke: #8a8a8a;
  stroke-width: 1;
}

.fold {
  fill: none;
  stroke: #a6a6a6;
  stroke-width: 1;
}

.blue-line {
  fill: none;
  stroke: #4f81bd;
  stroke-width: 1.500;
}

.badge-a {
  font-size: 12px;
  font-weight: 700;
  fill: #fff;
}

.az {
  font-size: 22px;
}

.az-big {
  font-size: 27px;
}

.blue-text { fill: #4a7ebb; }
.purple-text { fill: #8e5fb8; }

.help-mark {
  font-size: 58px;
  font-weight: 700;
  fill: #4a7ebb;
}

/* formula bar */
.formula-band {
  display: flex;
  height: 87px;
  padding: 20px 0 21px;
  box-sizing: border-box;
  background-color: #e6e6e6;
}

.fx-box {
  display: flex;
  align-items: center;
  height: 46px;
  box-sizing: border-box;
  background-color: #fff;
  border: 1px solid #d4d4d4;
  color: #555;
}

.name-box {
  width: 195px;
  padding-left: 1px;
  border-left: none;
  font-size: 25px;
}

.name-caret {
  margin-left: 138px;
}

.btn-box {
  width: 216px;
  margin-left: 62px;
  padding-left: 30px;
  gap: 42px;
  color: #bdbdbd;
  font-family: "DejaVu Sans", sans-serif;
  font-size: 26px;
}

.fx-mark {
  color: #777;
  font-family: "Liberation Serif", serif;
  font-style: italic;
}

.formula {
  flex: 1;
  margin-left: 8px;
  padding-left: 24px;
}

/* worksheet */
.sheet {
  position: relative;
}

.sheet table {
  table-layout: fixed;
  width: 2816px;
  border-collapse: separate;
  border-spacing: 0;
  font-family: "Liberation Serif", "Noto Sans CJK SC", serif;
  font-size: 27px;
  letter-spacing: -1px;
  color: #000;
}

.sheet th {
  height: 36px;
  padding: 4px 0 0;
  box-sizing: border-box;
  font-weight: 400;
  line-height: 28px;
  letter-spacing: 0;
  text-align: center;
  color: #217346;
}

.sheet th.corner {
  background: #e6e6e6 linear-gradient(135deg, transparent 50%, #b4b4b4 50%) no-repeat 6px 4px / 28px 28px;
  border-bottom: 1px solid #aaa;
}

.sheet th.sel {
  background-color: #d3f0e0;
  border-right: 1px solid #b7cfc1;
  border-bottom: 3px solid #217346;
}

.sheet th.plain {
  background-color: #e6e6e6;
  border-right: 1px solid #aaa;
  border-bottom: 1px solid #aaa;
  color: #3c3c3c;
}

.sheet td {
  height: 36px;
  padding: 3px 5px 0;
  box-sizing: border-box;
  overflow: hidden;
  background-color: #c4c4c4;
  border-right: 1px solid #adadad;
  border-bottom: 1px solid #a8a8a8;
  line-height: 30px;
  white-space: nowrap;
}

.sheet td.cn {
  font-family: "Noto Sans CJK SC", sans-serif;
  font-size: 28px;
  font-weight: 300;
  letter-spacing: 0;
}

.sheet td.ref {
  letter-spacing: -0.500px;
}

/* digits in the source font are narrower than the letters */
.sheet td.r,
.sheet td.code,
.sheet td.tag {
  letter-spacing: 1.500px;
}

.sheet td.r {
  text-align: right;
}

.sheet td.date {
  letter-spacing: 2.300px;
}

.sheet td.tag {
  background: #c4c4c4 linear-gradient(135deg, #0b6b0b 50%, transparent 50%) no-repeat 0 0 / 12px 12px;
}

.sheet td.rh {
  padding: 3px 13px 0 0;
  background-color: #e1e1e1;
  border-right: 1px solid #b4b4b4;
  border-bottom-color: #b4b4b4;
  letter-spacing: 0;
  text-align: center;
  color: #217346;
}

.sheet td.blank {
  background-color: #fff;
  border-right-color: #d4d4d4;
  border-bottom-color: #d4d4d4;
}

.sheet tr.head td {
  height: 39px;
  padding: 3px 5px 0;
  background-color: #929292;
  border-top: 1px solid #fff;
  font-family: "Noto Sans CJK SC", sans-serif;
  font-size: 28px;
  font-weight: 700;
  letter-spacing: 0;
}

.sheet tr.head td.thin {
  font-weight: 400;
}

.sheet tr.head td.rh {
  padding: 4px 13px 0 0;
  background-color: #e1e1e1;
  border-top: none;
  font-family: "Liberation Serif", serif;
  font-size: 27px;
  font-weight: 400;
}

.sheet tr.head td.blank {
  background-color: #fff;
  border-top: none;
}

.erp {
  font-size: 22px;
}

.sel-edge {
  position: absolute;
  top: 33px;
  left: 2637px;
  bottom: 0;
  width: 4px;
  background-color: #217346;
}

.sel-handle {
  position: absolute;
  top: 33px;
  left: 2634px;
  width: 8px;
  height: 8px;
  background-color: #217346;
  border-left: 1px solid #fff;
  border-bottom: 1px solid #fff;
}

/* tutorial marks */
.marks {
  position: absolute;
  top: 0;
  left: 0;
}

.note {
  position: absolute;
  color: #ee1c25;
  font-family: "Noto Sans CJK SC", sans-serif;
  font-size: 39px;
  font-style: italic;
  line-height: 44px;
  white-space: nowrap;
  -webkit-text-stroke: 0.6px #ee1c25;
}

.note-1 {
  top: 334px;
  left: 74px;
  letter-spacing: 0.400px;
}

.note-2 {
  top: 143px;
  left: 795px;
  font-size: 40px;
}

.note-3 {
  top: 312px;
  left: 1467px;
  font-size: 40px;
}
```
